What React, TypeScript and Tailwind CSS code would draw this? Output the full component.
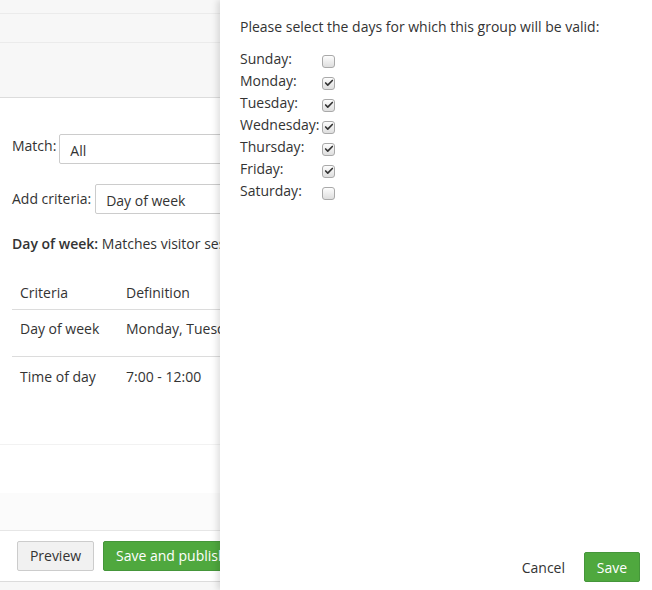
import { Check } from "lucide-react";

const days = [
  { name: "Sunday", checked: false },
  { name: "Monday", checked: true },
  { name: "Tuesday", checked: true },
  { name: "Wednesday", checked: true },
  { name: "Thursday", checked: true },
  { name: "Friday", checked: true },
  { name: "Saturday", checked: false },
];

function Box({ checked }: { checked: boolean }) {
  return (
    <span className="flex size-[13px] items-center justify-center rounded-[3px] border border-[#a9a9a9] bg-gradient-to-b from-[#fdfdfd] to-[#dedede]">
      {checked && <Check className="size-[10px] text-[#333]" strokeWidth={4} />}
    </span>
  );
}

function Page() {
  return (
    <div className="w-full text-[14px] text-[#333]">
      <div className="h-[14px] border-b border-[#ebebeb] bg-[#f7f7f7]" />
      <div className="h-[29px] border-b border-[#ebebeb] bg-[#f7f7f7]" />
      <div className="h-[55px] border-b border-[#dcdcdc] bg-[#f7f7f7]" />
      <div className="px-3 pt-[36px]">
        <div className="flex items-center">
          <span className="mt-[-8px]">Match:</span>
          <div className="ml-[3px] flex h-[30px] w-[400px] items-center rounded-[2px] border border-[#ccc] px-[10px] pt-[2px]">
            All
          </div>
        </div>
        <div className="mt-[20px] flex items-center">
          <span className="mt-[-1px]">Add criteria:</span>
          <div className="ml-[4px] flex h-[30px] w-[400px] items-center rounded-[2px] border border-[#ccc] px-[10px] pt-[2px]">
            Day of week
          </div>
        </div>
        <div className="mt-[19px] whitespace-nowrap">
          <span className="font-semibold">Day of week:</span> Matches visitor sessions on the selected days
        </div>
        <div className="mt-[18px]">
          <div className="flex h-[38px] items-center border-b border-[#dcdcdc] pt-[3px]">
            <span className="w-[114px] pl-[8px]">Criteria</span>
            <span>Definition</span>
          </div>
          <div className="flex h-[47px] items-center border-b border-[#dcdcdc] pb-[9px]">
            <span className="w-[114px] pl-[8px]">Day of week</span>
            <span className="whitespace-nowrap">Monday, Tuesday, Wednesday</span>
          </div>
          <div className="flex h-[38px] items-center">
            <span className="w-[114px] pl-[8px]">Time of day</span>
            <span>7:00 - 12:00</span>
          </div>
        </div>
      </div>
      <div className="mt-[49px] h-[49px] border-t border-[#f2f2f2]" />
      <div className="h-[38px] border-b border-[#e6e6e6] bg-[#fbfbfb]" />
      <div className="flex h-[51px] items-center gap-[9px] border-b border-[#dcdcdc] pl-[17px] pb-[1px]">
        <button className="h-[30px] w-[77px] rounded-[2px] border border-[#ccc] bg-[#f1f1f1] text-[#333]">
          Preview
        </button>
        <button className="h-[30px] whitespace-nowrap rounded-[2px] border border-[#45963a] bg-[#4fa83e] px-[12px] text-white">
          Save and publish
        </button>
      </div>
      <div className="h-[12px] bg-[#f7f7f7]" />
    </div>
  );
}

export default function App() {
  return (
    <div
      className="relative h-[590px] w-[652px] overflow-hidden bg-white"
      style={{ fontFamily: '"Open Sans", sans-serif' }}
    >
      <Page />
      <div className="absolute right-0 top-0 flex h-[590px] w-[432px] flex-col bg-white text-[14px] text-[#333] shadow-[-3px_0_6px_rgba(0,0,0,0.12)]">
        <div className="pl-[20px] pt-[17px]">
          <p className="leading-[20px]">Please select the days for which this group will be valid:</p>
          <div className="mt-[13px]">
            {days.map((d) => (
              <div key={d.name} className="flex h-[22px] items-center">
                <span className="w-[82px] mt-[-5px]">{d.name}:</span>
                <Box checked={d.checked} />
              </div>
            ))}
          </div>
        </div>
        <div className="mt-auto flex items-center justify-end gap-[19px] pb-[8px] pr-[12px]">
          <span>Cancel</span>
          <button className="h-[30px] w-[56px] rounded-[2px] border border-[#45963a] bg-[#4fa83e] text-white">
            Save
          </button>
        </div>
      </div>
    </div>
  );
}
